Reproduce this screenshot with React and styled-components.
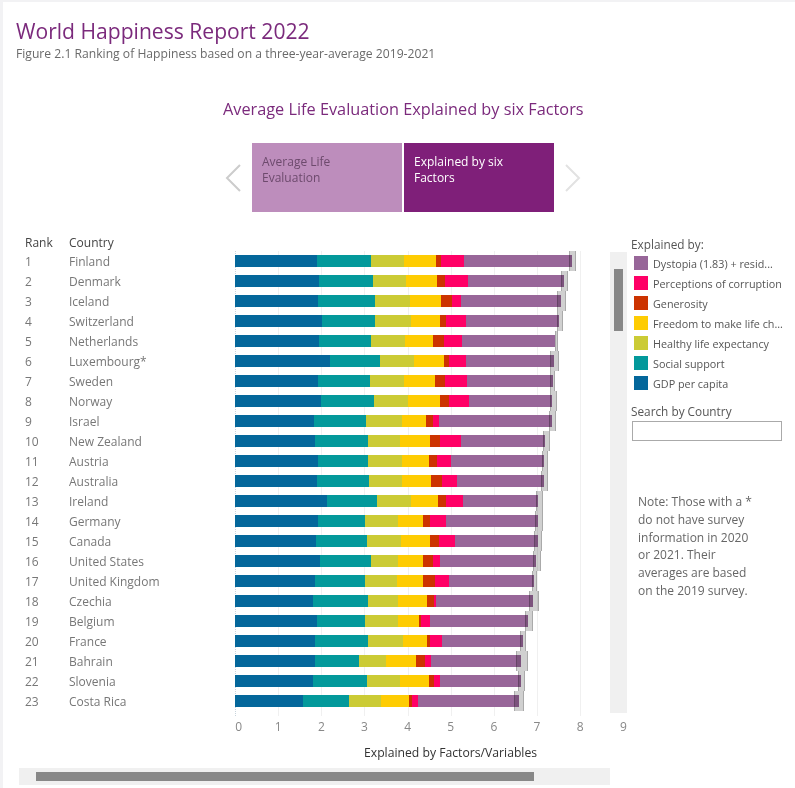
import React from "react";
import styled, { createGlobalStyle } from "styled-components";

const GlobalStyle = createGlobalStyle`
  html, body {
    margin: 0;
    padding: 0;
    background: #ffffff;
  }
`;

const FONT = `"Open Sans", "Liberation Sans", sans-serif`;
const UNIT = 43.15;

const COLORS = ["#04679b", "#03999b", "#cbcb35", "#fecc02", "#cc3300", "#ff0066", "#986699"];

// x boundaries of each segment read off the chart, then whisker start/end
const ROWS = [
  ["Finland", 317, 371, 404, 436, 441, 464, 572, 569, 576],
  ["Denmark", 319, 373, 406, 437, 445, 468, 564, 561, 568],
  ["Iceland", 318, 375, 410, 441, 452, 461, 561, 557, 566],
  ["Switzerland", 322, 375, 411, 440, 446, 466, 559, 557, 563],
  ["Netherlands", 319, 371, 405, 433, 444, 462, 555, 555, 558],
  ["Luxembourg*", 330, 380, 414, 444, 449, 466, 554, 550, 559],
  ["Sweden", 318, 370, 404, 435, 445, 467, 553, 550, 555],
  ["Norway", 321, 374, 408, 440, 449, 469, 552, 550, 557],
  ["Israel", 314, 366, 402, 426, 433, 439, 552, 549, 556],
  ["New Zealand", 315, 368, 400, 430, 440, 461, 545, 543, 550],
  ["Austria", 318, 368, 402, 429, 437, 451, 544, 542, 548],
  ["Australia", 317, 369, 402, 431, 442, 457, 544, 541, 548],
  ["Ireland", 327, 377, 411, 438, 446, 463, 538, 536, 543],
  ["Germany", 318, 365, 398, 423, 430, 446, 538, 535, 543],
  ["Canada", 316, 367, 401, 430, 439, 455, 538, 534, 542],
  ["United States", 320, 371, 398, 423, 433, 440, 536, 533, 541],
  ["United Kingdom", 315, 365, 397, 423, 435, 449, 534, 532, 537],
  ["Czechia", 313, 368, 398, 427, 434, 436, 533, 529, 539],
  ["Belgium", 317, 365, 398, 419, 421, 430, 528, 525, 533],
  ["France", 315, 368, 403, 427, 430, 442, 523, 520, 526],
  ["Bahrain", 315, 359, 386, 416, 425, 431, 521, 516, 528],
  ["Slovenia", 313, 367, 400, 429, 434, 440, 521, 518, 525],
  ["Costa Rica", 303, 349, 381, 409, 412, 418, 519, 514, 524],
];

const LEGEND = [
  ["Dystopia (1.83) + resid...", COLORS[6]],
  ["Perceptions of corruption", COLORS[5]],
  ["Generosity", COLORS[4]],
  ["Freedom to make life ch...", COLORS[3]],
  ["Healthy life expectancy", COLORS[2]],
  ["Social support", COLORS[1]],
  ["GDP per capita", COLORS[0]],
];

const Page = styled.div`
  width: 795px;
  height: 788px;
  box-sizing: border-box;
  overflow: hidden;
  background: #fff;
  border-top: 2px solid #f2f2f4;
  border-left: 3px solid #f2f2f4;
  font-family: ${FONT};
  display: flex;
  flex-direction: column;
`;

const Header = styled.header`
  padding: 16px 0 0 13px;
`;

const Title = styled.h1`
  margin: 0;
  font-size: 21.1px;
  line-height: 26px;
  font-weight: 400;
  color: #7b2a7c;
`;

const Subtitle = styled.div`
  margin-top: 2px;
  font-size: 12.15px;
  line-height: 16px;
  color: #6a6a6a;
`;

const ChartTitle = styled.h2`
  margin: 36px 0 0 220px;
  font-size: 16.3px;
  line-height: 22px;
  font-weight: 400;
  color: #7b2a7c;
`;

const Slider = styled.div`
  display: flex;
  align-items: center;
  margin: 23px 0 0 222px;
  height: 69px;
`;

const Arrow = styled.svg`
  width: 18px;
  height: 28px;
  fill: none;
  stroke: ${(p) => p.$color};
  stroke-width: 2;
  margin: ${(p) => p.$margin};
`;

const Step = styled.div`
  width: ${(p) => p.$width}px;
  height: 69px;
  box-sizing: border-box;
  padding: 11px 10px;
  margin-right: ${(p) => (p.$active ? 0 : 2)}px;
  font-size: 12px;
  line-height: 16px;
  font-weight: ${(p) => (p.$active ? 500 : 400)};
  background: ${(p) => (p.$active ? "#7f1f79" : "#bd8dbc")};
  color: ${(p) => (p.$active ? "#fff" : "#6d4a6d")};
`;

const Body = styled.div`
  display: flex;
  margin-top: 21px;
`;

const Left = styled.div`
  width: 607px;
  flex: none;
`;

const Heading = styled.div`
  display: flex;
  height: 20px;
  padding-left: 22px;
  font-size: 12px;
  line-height: 20px;
  color: #444;
`;

const RankCell = styled.div`
  width: 44px;
  flex: none;
`;

const CountryCell = styled.div`
  width: 166px;
  flex: none;
`;

const Table = styled.div`
  display: flex;
  margin-top: -2px;
`;

const Labels = styled.div`
  width: 232px;
  flex: none;
  padding: 1px 0 0 22px;
  box-sizing: border-box;
  font-size: 12px;
  color: #777;
`;

const LabelRow = styled.div`
  display: flex;
  height: 20px;
  line-height: 20px;
`;

const Plot = styled.div`
  width: 375px;
  height: 465px;
  flex: none;
  box-sizing: border-box;
  padding-top: 4px;
  border-left: 1px dotted #c8d4dc;
  background-image: repeating-linear-gradient(
    to right,
    transparent 0,
    transparent ${UNIT - 1}px,
    #f0f0f0 ${UNIT - 1}px,
    #f0f0f0 ${UNIT}px
  );
`;

const Track = styled.div`
  position: relative;
  height: 20px;
  margin-left: -1px;
`;

const Bar = styled.div`
  display: flex;
  height: 12px;
`;

const Segment = styled.div`
  flex: none;
  height: 100%;
  background: ${(p) => p.$color};
`;

const Whisker = styled.div`
  position: absolute;
  top: -4px;
  height: 20px;
  box-sizing: border-box;
  background: #d0d0d0;
  mix-blend-mode: multiply;
  border-right: 1px solid #aaa;
  border-left: 1px solid #aaa;
`;

const VScroll = styled.div`
  width: 17px;
  height: 461px;
  flex: none;
  margin-top: 19px;
  background: #f0f0f0;
  box-sizing: border-box;
  padding: 17px 4px 0;
`;

const VThumb = styled.div`
  width: 9px;
  height: 62px;
  background: #888;
`;

const Ticks = styled.div`
  display: flex;
  margin: 2px 0 0 210.5px;
  font-size: 12px;
  line-height: 18px;
  color: #888;
`;

const Tick = styled.div`
  width: ${UNIT}px;
  flex: none;
  box-sizing: border-box;
  text-align: center;
  padding-left: ${(p) => (p.$first ? 7 : 0)}px;
`;

const AxisTitle = styled.div`
  margin: 9px 0 0 361px;
  font-size: 12.2px;
  line-height: 16px;
  color: #333;
  white-space: nowrap;
`;

const HScroll = styled.div`
  height: 17px;
  margin: 7px 0 0 16px;
  background: #f0f0f0;
  box-sizing: border-box;
  padding: 4px 0 0 17px;
`;

const HThumb = styled.div`
  width: 498px;
  height: 9px;
  background: #888;
`;

const Side = styled.aside`
  flex: 1;
  padding: 3px 0 0 4px;
`;

const SideTitle = styled.div`
  font-size: 11.8px;
  line-height: 16px;
  color: #555;
`;

const LegendList = styled.div`
  margin-top: 1px;
`;

const LegendItem = styled.div`
  display: flex;
  align-items: center;
  height: 20px;
  padding-left: 3px;
  font-size: 10.8px;
  color: #555;
  white-space: nowrap;
`;

const Swatch = styled.span`
  width: 14px;
  height: 14px;
  flex: none;
  margin-right: 5px;
  background: ${(p) => p.$color};
`;

const SearchLabel = styled(SideTitle)`
  margin-top: 10px;
`;

const SearchBox = styled.input`
  display: block;
  width: 150px;
  height: 20px;
  margin: 2px 0 0 1px;
  box-sizing: border-box;
  border: 1px solid #aaa;
  background: #fff;
  padding: 0;
`;

const Note = styled.p`
  margin: 52px 0 0 7px;
  width: 122px;
  font-size: 12px;
  line-height: 17.8px;
  color: #666;
`;

const App = () => (
  <Page>
    <GlobalStyle />
    <Header>
      <Title>World Happiness Report 2022</Title>
      <Subtitle>Figure 2.1 Ranking of Happiness based on a three-year-average 2019-2021</Subtitle>
    </Header>
    <ChartTitle>Average Life Evaluation Explained by six Factors</ChartTitle>
    <Slider>
      <Arrow viewBox="0 0 18 28" $margin="0 9px 0 0" $color="#ccc">
        <polyline points="15,1 2,14 15,27" />
      </Arrow>
      <Step $width={150}>Average Life<br />Evaluation</Step>
      <Step $width={150} $active>Explained by six<br />Factors</Step>
      <Arrow viewBox="0 0 18 28" $margin="0 0 0 9px" $color="#e2e2e2">
        <polyline points="3,1 16,14 3,27" />
      </Arrow>
    </Slider>
    <Body>
      <Left>
        <Heading>
          <RankCell>Rank</RankCell>
          <CountryCell>Country</CountryCell>
        </Heading>
        <Table>
          <Labels>
            {ROWS.map((row, i) => (
              <LabelRow key={row[0]}>
                <RankCell>{i + 1}</RankCell>
                <CountryCell>{row[0]}</CountryCell>
              </LabelRow>
            ))}
          </Labels>
          <Plot>
            {ROWS.map((row) => (
              <Track key={row[0]}>
                <Bar>
                  {COLORS.map((color, s) => (
                    <Segment
                      key={color}
                      $color={color}
                      style={{ width: row[s + 1] - (s === 0 ? 235 : row[s]) }}
                    />
                  ))}
                </Bar>
                <Whisker style={{ left: row[8] - 235, width: row[9] - row[8] }} />
              </Track>
            ))}
          </Plot>
        </Table>
        <Ticks>
          {[0, 1, 2, 3, 4, 5, 6, 7, 8, 9].map((n) => (
            <Tick key={n} $first={n === 0}>{n}</Tick>
          ))}
        </Ticks>
        <AxisTitle>Explained by Factors/Variables</AxisTitle>
        <HScroll>
          <HThumb />
        </HScroll>
      </Left>
      <VScroll>
        <VThumb />
      </VScroll>
      <Side>
        <SideTitle>Explained by:</SideTitle>
        <LegendList>
          {LEGEND.map(([label, color]) => (
            <LegendItem key={label}>
              <Swatch $color={color} />
              {label}
            </LegendItem>
          ))}
        </LegendList>
        <SearchLabel>Search by Country</SearchLabel>
        <SearchBox />
        <Note>
          Note: Those with a * do not have survey information in 2020 or 2021. Their averages are
          based on the 2019 survey.
        </Note>
      </Side>
    </Body>
  </Page>
);

export default App;
